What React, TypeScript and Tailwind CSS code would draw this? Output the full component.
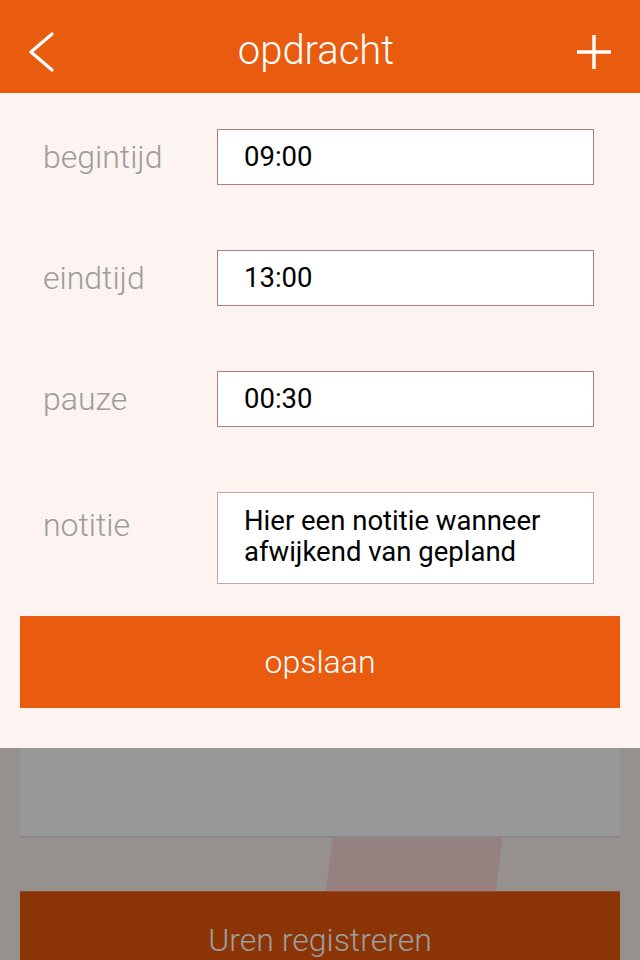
import { ReactNode } from 'react';

const Field = ({ label, children, tall }: { label: string; children: ReactNode; tall?: boolean }) => {
  return (
    <div className={`flex ${tall ? 'items-start' : 'items-center'}`}>
      <div className={`w-[217px] pl-[43px] text-[32px] font-light text-[#9c9c9c] ${tall ? 'pt-[9px]' : ''}`}>
        {label}
      </div>
      <div
        className={`w-[377px] bg-white border border-[#b57b79] pl-[26px] text-[27.5px] text-black ${
          tall ? 'h-[92px] pt-[12px] leading-[31px] border-[#c9a3a1]' : 'h-[56px] flex items-center'
        }`}
      >
        {children}
      </div>
    </div>
  );
};

const App = () => {
  return (
    <div className="w-[640px] h-[960px] overflow-hidden bg-[#96918e] font-['Roboto',sans-serif]">
      {/* Header */}
      <div className="h-[93px] bg-[#e95b0e] flex items-center justify-between px-[28px] text-white">
        <svg className="mt-[10px]" width="28" height="40" viewBox="0 0 28 40" fill="none" stroke="white" strokeWidth="3.2" strokeLinecap="round" strokeLinejoin="round">
          <path d="M24 2 L3 20 L24 38" />
        </svg>
        <span className="text-[40px] font-light leading-none mt-[8px]">opdracht</span>
        <svg className="mt-[10px]" width="36" height="36" viewBox="0 0 36 36" fill="none" stroke="white" strokeWidth="3.4">
          <path d="M18 1 V35 M1 18 H35" />
        </svg>
      </div>

      {/* Form panel */}
      <div className="bg-[#fdf3f0] pt-[36px] pb-[40px]">
        <div className="flex flex-col gap-[65px]">
          <Field label="begintijd">09:00</Field>
          <Field label="eindtijd">13:00</Field>
          <Field label="pauze">00:30</Field>
          <Field label="notitie" tall>
            Hier een notitie wanneer
            <br />
            afwijkend van gepland
          </Field>
        </div>
        <div className="mx-[20px] mt-[32px] h-[92px] bg-[#e95b0e] flex items-center justify-center text-white text-[32px] font-light">
          opslaan
        </div>
      </div>

      {/* Background screen under overlay */}
      <div className="mx-[20px] h-[90px] bg-[#989898] border-b-2 border-[#8a8888]" />
      <div className="h-[53px] px-[20px]">
        <svg width="600" height="53" viewBox="0 0 600 53">
          <path d="M313 0 L482 0 Q479 30 476 53 L306 53 Q309 25 313 0 Z" fill="#968080" />
        </svg>
      </div>
      <div className="mx-[20px] h-[69px] bg-[#8b3507] border-t border-[#8f4a2a] flex justify-center pt-[24px] text-[32px] font-light text-[#9e9e9e] leading-[48px]">
        Uren registreren
      </div>
    </div>
  );
};

export default App;
